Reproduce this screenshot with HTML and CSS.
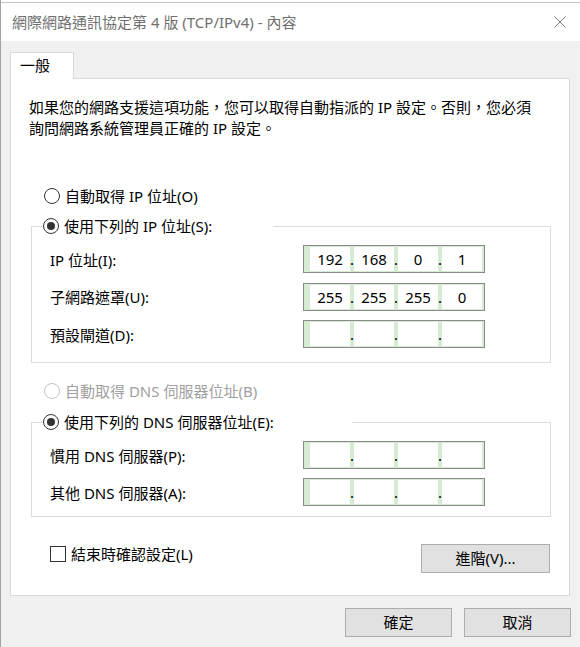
FILE: index.html
```html
<!DOCTYPE html>
<html lang="zh-Hant">
<head>
<meta charset="utf-8">
<title>TCP/IPv4</title>
<link rel="stylesheet" href="styles.css">
</head>
<body>
<div class="window">
  <div class="behind"></div>
  <header class="titlebar">
    <span class="title">網際網路通訊協定第 4 版 (TCP/IPv4) - 內容</span>
    <svg class="close" width="12" height="12" viewBox="0 0 12 12"><path d="M0.5 0.5 L11.5 11.5 M11.5 0.5 L0.5 11.5" stroke="#7a7a7a" stroke-width="1" fill="none"/></svg>
  </header>
  <main class="client">
    <div class="tabs"><div class="tab">一般</div></div>
    <section class="panel">
      <p class="desc">如果您的網路支援這項功能，您可以取得自動指派的 IP 設定。否則，您必須<br>詢問網路系統管理員正確的 IP 設定。</p>

      <div class="opt opt-ipauto"><span class="radio"></span>自動取得 IP 位址(O)</div>
      <fieldset class="group group-ip">
        <legend class="opt legend-ip"><span class="radio checked"></span>使用下列的 IP 位址(S):</legend>
        <div class="row first"><span class="lbl">IP 位址(I):</span>
          <div class="ipbox"><span class="cell">192</span><span class="dot">.</span><span class="cell">168</span><span class="dot">.</span><span class="cell">0</span><span class="dot">.</span><span class="cell">1</span></div>
        </div>
        <div class="row"><span class="lbl">子網路遮罩(U):</span>
          <div class="ipbox"><span class="cell">255</span><span class="dot">.</span><span class="cell">255</span><span class="dot">.</span><span class="cell">255</span><span class="dot">.</span><span class="cell">0</span></div>
        </div>
        <div class="row"><span class="lbl">預設閘道(D):</span>
          <div class="ipbox"><span class="cell"></span><span class="dot">.</span><span class="cell"></span><span class="dot">.</span><span class="cell"></span><span class="dot">.</span><span class="cell"></span></div>
        </div>
      </fieldset>

      <div class="opt opt-dnsauto disabled"><span class="radio"></span>自動取得 DNS 伺服器位址(B)</div>
      <fieldset class="group group-dns">
        <legend class="opt legend-dns"><span class="radio checked"></span>使用下列的 DNS 伺服器位址(E):</legend>
        <div class="row first"><span class="lbl">慣用 DNS 伺服器(P):</span>
          <div class="ipbox"><span class="cell"></span><span class="dot">.</span><span class="cell"></span><span class="dot">.</span><span class="cell"></span><span class="dot">.</span><span class="cell"></span></div>
        </div>
        <div class="row"><span class="lbl">其他 DNS 伺服器(A):</span>
          <div class="ipbox"><span class="cell"></span><span class="dot">.</span><span class="cell"></span><span class="dot">.</span><span class="cell"></span><span class="dot">.</span><span class="cell"></span></div>
        </div>
      </fieldset>

      <div class="checkrow">
        <div class="opt"><span class="check"></span>結束時確認設定(L)</div>
        <button class="btn btn-adv">進階(V)...</button>
      </div>
    </section>
  </main>
  <footer class="footer">
    <button class="btn">確定</button>
    <button class="btn">取消</button>
  </footer>
</div>
</body>
</html>
```

FILE: styles.css
```css
* { box-sizing: border-box; }
html, body { margin: 0; padding: 0; }
body {
  width: 580px;
  height: 647px;
  overflow: hidden;
  background: #f0f0f0;
  font-family: "Noto Sans", "Noto Sans CJK TC", sans-serif;
  font-size: 15px;
  color: #000;
}
.window {
  height: 647px;
  border-left: 1px solid #a3a3a3;
  background: #f0f0f0;
  display: flex;
  flex-direction: column;
}
.behind {
  height: 3px;
  background: #fff;
  border-bottom: 1px solid #c4c4c4;
}
.titlebar {
  height: 38px;
  background: #fff;
  display: flex;
  align-items: center;
  justify-content: space-between;
  padding: 0 14px 0 11px;
}
.title {
  color: #707070;
  line-height: 20px;
  white-space: nowrap;
}
.close { display: block; }
.client { padding: 11px 0 0 9px; }
.tabs { height: 26px; display: flex; }
.tab {
  width: 64px;
  height: 27px;
  border: 1px solid #d9d9d9;
  border-bottom: none;
  background: #fff;
  padding-left: 9px;
  line-height: 25px;
  position: relative;
  z-index: 1;
}
.panel {
  width: 560px;
  background: #fff;
  border: 1px solid #d9d9d9;
  padding: 0 0 22px 0;
}
.desc {
  margin: 18px 0 0 18px;
  line-height: 21px;
  white-space: nowrap;
}
.opt {
  display: flex;
  align-items: center;
  gap: 5px;
  height: 20px;
  line-height: 20px;
  white-space: nowrap;
}
.radio {
  width: 16px;
  height: 16px;
  border: 1px solid #333;
  border-radius: 50%;
  flex: none;
  display: flex;
  align-items: center;
  justify-content: center;
  background: #fff;
}
.radio.checked::after {
  content: "";
  width: 8px;
  height: 8px;
  border-radius: 50%;
  background: #333;
}
.check {
  width: 16px;
  height: 16px;
  border: 1px solid #333;
  background: #fff;
  flex: none;
}
.disabled { color: #a0a0a0; }
.disabled .radio { border-color: #c4c4c4; }
.opt-ipauto { margin: 47px 0 0 33px; }
.opt-dnsauto { margin: 18px 0 0 33px; }
.group {
  margin: 10px 0 0 20px;
  width: 520px;
  min-inline-size: 0;
  border: 1px solid #dcdcdc;
  padding: 0 0 14px 0;
}
.group-dns { margin-top: 11px; padding-bottom: 10px; }
.group legend {
  margin-left: 11px;
  padding: 0;
  background: #fff;
}
.legend-ip { width: 230px; }
.legend-dns { width: 309px; }
.row {
  display: flex;
  align-items: center;
  height: 28px;
  margin: 9.5px 0 0 18px;
}
.row.first { margin-top: 9px; }
.group-dns .row { margin-top: 9px; }
.lbl {
  width: 253px;
  flex: none;
  white-space: nowrap;
}
.ipbox {
  width: 182px;
  height: 28px;
  border: 1px solid #8a8a8a;
  background: #d5ecd3;
  padding: 1px 2px 1px 6px;
  display: flex;
}
.cell {
  width: 40px;
  height: 24px;
  background: #fff;
  text-align: center;
  line-height: 24px;
  flex: none;
}
.dot {
  width: 4px;
  line-height: 24px;
  text-align: center;
  flex: none;
  overflow: visible;
  display: flex;
  justify-content: center;
}
.checkrow {
  display: flex;
  justify-content: space-between;
  align-items: flex-start;
  margin: 27px 19px 0 39px;
}
.btn {
  height: 29px;
  width: 107px;
  background: #e1e1e1;
  border: 1px solid #adadad;
  font: inherit;
  color: #000;
  padding: 0;
  line-height: 27px;
}
.btn-adv { width: 129px; }
.footer {
  display: flex;
  justify-content: flex-end;
  gap: 12px;
  padding: 12px 9px 0 0;
}
```
